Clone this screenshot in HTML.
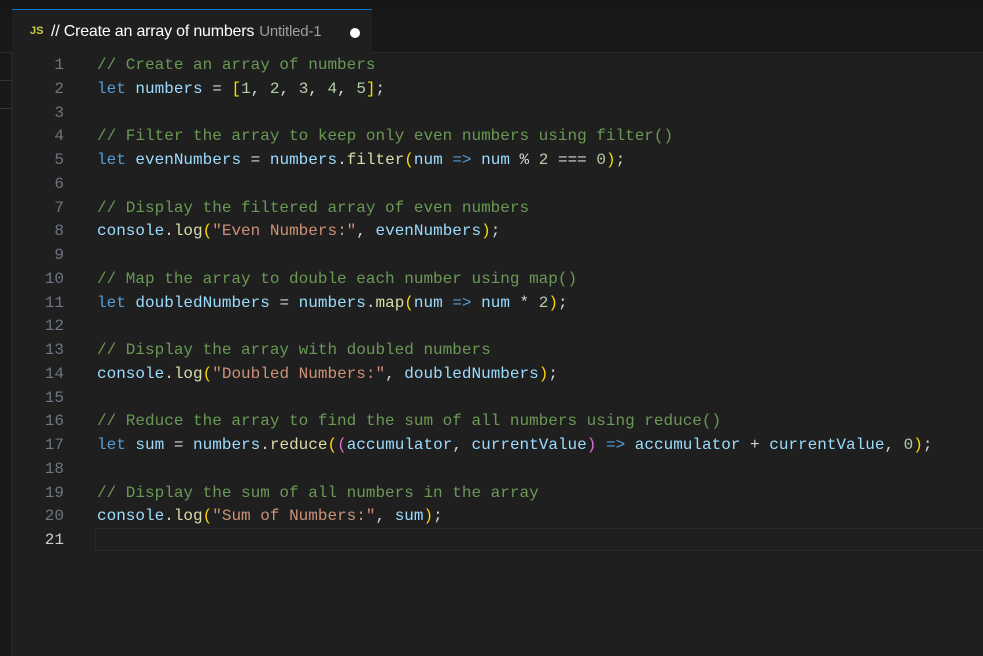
<!DOCTYPE html><html><head><style>
body{margin:0;width:983px;height:656px;background:#1f1f1f;overflow:hidden;position:relative;font-family:"Liberation Sans",sans-serif}
.top{position:absolute;left:0;top:0;width:983px;height:9px;background:#161616}
.bar{position:absolute;left:0;top:9px;width:983px;height:43px;background:#181818;border-bottom:1px solid #2b2b2b}
.tab{position:absolute;left:12px;top:9px;width:360px;height:44px;background:#1f1f1f;border-top:1px solid #0078d4;box-sizing:border-box}
.tab .js{position:absolute;left:18px;top:15px;color:#cbcb41;font-size:11px;font-weight:bold}
.tab .t{position:absolute;left:39px;top:13px;color:#fff;font-size:16px;letter-spacing:-0.2px}
.tab .u{color:#9d9d9d;font-size:15px;margin-left:5px}
.dot{position:absolute;left:338px;top:18px;width:10px;height:10px;border-radius:50%;background:#fff}
.side{position:absolute;left:0;top:53px;width:11px;height:603px;background:#181818;border-right:1px solid #2b2b2b}
.side i{position:absolute;left:0;width:11px;height:1px;background:#333}
.code{position:absolute;left:0;top:54px;font-family:"Liberation Mono",monospace;font-size:16px;line-height:23.75px;white-space:pre}
.ln{position:absolute;left:20px;width:44px;text-align:right;color:#6e7681}
.l{position:absolute;left:97px;color:#d4d4d4}
.c{color:#6a9955}.k{color:#569cd6}.v{color:#9cdcfe}.f{color:#dcdcaa}.n{color:#b5cea8}.s{color:#ce9178}.y{color:#ffd700}.p{color:#da70d6}
.cur{position:absolute;left:95px;top:528px;width:888px;height:23px;border:1px solid #282828;border-right:none;box-sizing:border-box}
</style></head><body>
<div class="top"></div><div class="bar"></div>
<div class="tab"><span class="js">JS</span><span class="t">// Create an array of numbers<span class="u">Untitled-1</span></span><div class="dot"></div></div>
<div class="side"><i style="top:27px"></i><i style="top:55px"></i></div>
<div class="cur"></div>
<div class="code">
<div class="ln" style="top:0">1
2
3
4
5
6
7
8
9
10
11
12
13
14
15
16
17
18
19
20
<span style="color:#ccc">21</span></div>
<div class="l" style="top:0"><span class="c">// Create an array of numbers</span>
<span class="k">let</span> <span class="v">numbers</span> = <span class="y">[</span><span class="n">1</span>, <span class="n">2</span>, <span class="n">3</span>, <span class="n">4</span>, <span class="n">5</span><span class="y">]</span>;

<span class="c">// Filter the array to keep only even numbers using filter()</span>
<span class="k">let</span> <span class="v">evenNumbers</span> = <span class="v">numbers</span>.<span class="f">filter</span><span class="y">(</span><span class="v">num</span> <span class="k">=&gt;</span> <span class="v">num</span> % <span class="n">2</span> === <span class="n">0</span><span class="y">)</span>;

<span class="c">// Display the filtered array of even numbers</span>
<span class="v">console</span>.<span class="f">log</span><span class="y">(</span><span class="s">"Even Numbers:"</span>, <span class="v">evenNumbers</span><span class="y">)</span>;

<span class="c">// Map the array to double each number using map()</span>
<span class="k">let</span> <span class="v">doubledNumbers</span> = <span class="v">numbers</span>.<span class="f">map</span><span class="y">(</span><span class="v">num</span> <span class="k">=&gt;</span> <span class="v">num</span> * <span class="n">2</span><span class="y">)</span>;

<span class="c">// Display the array with doubled numbers</span>
<span class="v">console</span>.<span class="f">log</span><span class="y">(</span><span class="s">"Doubled Numbers:"</span>, <span class="v">doubledNumbers</span><span class="y">)</span>;

<span class="c">// Reduce the array to find the sum of all numbers using reduce()</span>
<span class="k">let</span> <span class="v">sum</span> = <span class="v">numbers</span>.<span class="f">reduce</span><span class="y">(</span><span class="p">(</span><span class="v">accumulator</span>, <span class="v">currentValue</span><span class="p">)</span> <span class="k">=&gt;</span> <span class="v">accumulator</span> + <span class="v">currentValue</span>, <span class="n">0</span><span class="y">)</span>;

<span class="c">// Display the sum of all numbers in the array</span>
<span class="v">console</span>.<span class="f">log</span><span class="y">(</span><span class="s">"Sum of Numbers:"</span>, <span class="v">sum</span><span class="y">)</span>;
</div></div>
</body></html>
